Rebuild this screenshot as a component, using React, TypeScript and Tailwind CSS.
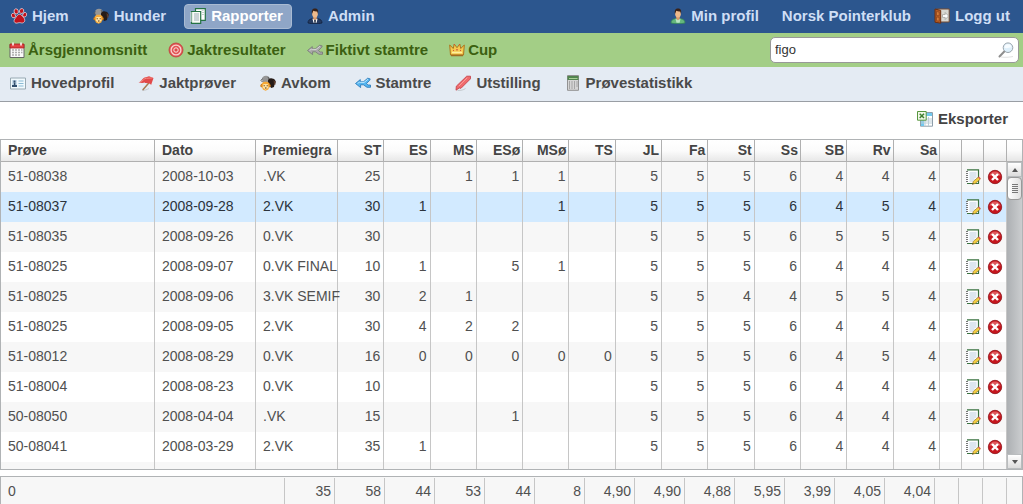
import type { ReactNode } from 'react'
import clsx from 'clsx'

function Icon({ children }: { children: ReactNode }) {
  return (
    <svg className="size-4 shrink-0" viewBox="0 0 16 16" fill="none" aria-hidden="true">
      {children}
    </svg>
  )
}

function PawIcon() {
  return (
    <Icon>
      <g fill="#c1121c" stroke="#fff" strokeWidth=".6">
        <ellipse cx="2.4" cy="7.5" rx="2" ry="2.3" transform="rotate(-30 2.4 7.5)" />
        <ellipse cx="5.2" cy="3.4" rx="2.1" ry="2.6" transform="rotate(-15 5.2 3.4)" />
        <ellipse cx="10.6" cy="3" rx="2.1" ry="2.5" transform="rotate(15 10.6 3)" />
        <ellipse cx="13.7" cy="6.8" rx="1.9" ry="2.4" transform="rotate(25 13.7 6.8)" />
        <path d="M8.5 6.3c2 0 2.4 1.700 3.900 3 1.900 1.700 1.900 4.400-.1 5.400-1.600.8-2.600-.2-4-.1-1.600.1-3 1.200-4.300.1-1.700-1.400-.8-3.400.5-4.800 1.200-1.300 1.900-3.600 4-3.600z" />
      </g>
    </Icon>
  )
}

function DogsIcon() {
  return (
    <Icon>
      <path d="M2 4.5C2 2 3.5.8 6 .8S9.7 2 9.8 4.4L8.5 8H3z" fill="#969696" />
      <path d="M2.5 3.5 1 5.5 2.5 7M8 2l1 2" stroke="#5d5d5d" />
      <path d="M8 5.6c.5-2 2-2.6 4-2.2 2 .2 3.7 1.4 3.8 3.6l-1.2 2-.6 3-2.6 1L8 10z" fill="#261b17" />
      <path d="m13.5 5 2 1.5v3l-1.5.3z" fill="#5b3929" />
      <path d="M1.5 9c.8-1.700 2-2.300 4-2.300s3.600.6 4.300 2.300l.6 2.300-1.200.8-.9 2.400-2.700 1.200-2.700-1.200L2 12.100l-1.400-.8z" fill="#f7a938" />
      <path d="M3.5 9h4.2l.8 3.5-2.9 2.3-2.9-2.3z" fill="#ffe3a1" />
      <path d="M1.5 9 .7 11.3l1.4.8M9.6 9l.8 2.300-1.300.8" stroke="#c37314" />
      <path d="M3.7 10.3h1v1h-1zM6.7 10.3h1v1h-1zM5 12.5h1.5v1H5z" fill="#50260c" />
    </Icon>
  )
}

function ReportIcon() {
  return (
    <Icon>
      <path d="M5.5.7h9.800v11.600H5.5z" fill="#fff" stroke="#257344" strokeWidth="1.2" />
      <path d="M1.5 3.5h9.200v11.800H1.5z" fill="#f7faf5" stroke="#257344" strokeWidth="1.2" />
      <path d="M4 6h5M4 8h5M4 10h5M4 12h5" stroke="#9dadb7" />
      <path d="M0 5h2.5M0 7h2.5M0 9h2.5M0 11h2.5M0 13h2.5" stroke="#e9efed" />
      <path d="M11.7 2.5h2M12 4.5h2M12 6.5h2" stroke="#c6d0d0" />
    </Icon>
  )
}

function PersonIcon({ suit }: { suit: boolean }) {
  return (
    <Icon>
      <path
        d="M1 15c0-2.6 1.2-3.6 4-4.3h6c2.8.7 4 1.7 4 4.3-3.5 1-10.500 1-14 0z"
        fill={suit ? '#243a61' : '#65b97d'}
        stroke={suit ? '#12213c' : '#33835a'}
        strokeWidth=".8"
      />
      <path d="M6.200 8h3.600v3L8 13.500 6.200 11z" fill="#d99b6c" />
      <path d="m5.400 10.500 2.600 1.700 2.600-1.700-1 4.300H6.500z" fill={suit ? '#fff' : '#b9e6c4'} />
      {suit && <path d="m8 11.500 1 1-.5 2.500h-1L7 12.500z" fill="#2a3649" />}
      <ellipse cx="8" cy="5.5" rx="2.9" ry="3.9" fill="#efba8b" />
      <path d="M5 6C4.200 2.300 5.500.5 8 .5S11.800 2.300 11 6l-.7-2.600c-1.400.2-3-.1-4-.7z" fill="#392117" />
    </Icon>
  )
}

function DoorIcon() {
  return (
    <Icon>
      <path d="M2.5 1h12.700v13H2.5z" fill="#d8d8d2" stroke="#754b31" />
      <path d="m1 1 5.700 1.400v12.800L1 14.200z" fill="#b95c24" stroke="#6d2f10" />
      <path d="m2.500 3.500 2.700.6v3.700l-2.700-.3zM2.500 9l2.700.3v3.900l-2.700-.5z" fill="#d47c3b" stroke="#8a421a" strokeWidth=".7" />
      <path d="M8.500 6.600h2.700V4.500L14.500 8l-3.300 3.500V9.400H8.500z" fill="#fff" stroke="#969692" strokeWidth=".7" />
    </Icon>
  )
}

function CalendarIcon() {
  return (
    <Icon>
      <path d="M1 2.5h14v13H1z" fill="#fafafa" stroke="#676767" />
      <path d="M1 2h14v4H1z" fill="#e24444" stroke="#aa2020" strokeWidth=".8" />
      <path d="M4 .5v3M12 .5v3" stroke="#fff" strokeWidth="1.5" />
      <path d="M3 8h2M6 8h2M9 8h2M12 8h1.500M3 10.500h2M6 10.500h2M9 10.500h2M12 10.500h1.500M3 13h2M6 13h2M9 13h2" stroke="#adadad" strokeWidth="1.5" />
    </Icon>
  )
}

function TargetIcon() {
  return (
    <Icon>
      <circle cx="8" cy="8" r="7" fill="#e25555" stroke="#c03a3a" strokeWidth=".8" />
      <circle cx="8" cy="8" r="4.9" stroke="#f9d4d0" strokeWidth="1.3" />
      <circle cx="8" cy="8" r="2.2" fill="#df4a49" stroke="#fbe5e2" />
    </Icon>
  )
}

function BranchIcon({ gray }: { gray?: boolean }) {
  return (
    <Icon>
      <path
        d="M.5 8.500 5.300 4.600v2.200h3.200l4.200-3.600 2.500.7-.5 1.400-3.200 3.200 1.600 1.500h2.400v2.300H12L8.400 9.800H5.600v2.800z"
        fill={gray ? '#a9a9a9' : '#55b5ef'}
        stroke={gray ? '#767676' : '#2475b6'}
        strokeWidth=".8"
        strokeLinejoin="round"
      />
      <path d="m2.500 8.300 2-1 4.500.2 4-3.300" stroke={gray ? '#d4d4d4' : '#b6e5ff'} />
    </Icon>
  )
}

function CrownIcon() {
  return (
    <Icon>
      <path d="M1.500 13 .7 3l3.600 3.500L5.200 2 8 5.700 10.800 2l.9 4.500L15.300 3l-.8 10z" fill="#f5ca50" stroke="#ad751d" />
      <path d="M3 10.500h10" stroke="#fff0a0" strokeWidth="1.5" />
      <path d="M7.300 7h1.400v1.500H7.300zM4 8h1v1H4zM11 8h1v1h-1zM5 2h1v1H5zM10 2h1v1h-1z" fill="#cf5839" />
      <path d="M2 13.500h12" stroke="#a16b22" strokeWidth="1.5" />
    </Icon>
  )
}

function CardIcon() {
  return (
    <Icon>
      <path d="M.5 3h15v11H.5z" fill="#f0f9fd" stroke="#98a9b2" />
      <path d="M2 5h5v7H2z" fill="#c8ddec" />
      <path d="M3.500 5.500h2v2.300h-2zM3.800 8h1.600v2H7V12H2v-2h1.800z" fill="#304e6d" />
      <path d="M8.500 6h5M8.500 8.500h5M8.500 11h5" stroke="#8bbbd4" />
    </Icon>
  )
}

function FlagIcon() {
  return (
    <Icon>
      <path d="M4 15.500c3-.2 5-.8 7-2" stroke="#c6cbd0" />
      <path d="m12.500 6-7.800 9" stroke="#a97a4e" strokeWidth="1.5" />
      <path d="M.5 7.300C4 6.500 4.500 2 8 2.200l3-.9L15.500 3l-2.400 7C11 7.300 8.500 9 6.700 7.600 5 8.200 3 8.200.5 7.300z" fill="#e24949" />
      <path d="M2 6.900C5 6.500 6 3 8.500 3.300l6-.4" stroke="#f48b82" />
    </Icon>
  )
}

function RibbonIcon() {
  return (
    <Icon>
      <path d="M2.500 15.500c3.500 0 6-.5 8-2" stroke="#c4cace" />
      <path d="M11.700 1.200h3.800v2.600L6 13.300l-1.700-.3L1 15.200l.3-4z" fill="#ef6a6c" stroke="#c23b42" strokeWidth=".8" />
      <path d="m12.300 2.700-8.500 8.500" stroke="#fa9c9b" />
    </Icon>
  )
}

function CalculatorIcon() {
  return (
    <Icon>
      <path d="M2.500.5h11v14.800h-11z" fill="#d5d5d5" stroke="#929292" />
      <path d="M2.500 1h11v4h-11z" fill="#52844f" />
      <path d="M4 3.500h8.500" stroke="#a8cf95" />
      <path d="M4 7h1M6.500 7h1M9 7h1M11.500 7h1M4 9h1M6.500 9h1M9 9h1M11.500 9h1M4 11h1M6.500 11h1M9 11h1M11.500 11h1M4 13h1M6.500 13h1M9 13h1" stroke="#777" />
    </Icon>
  )
}

function SearchIcon() {
  return (
    <Icon>
      <path d="M3 15c4 .6 8 .3 12-.5" stroke="#e1e1e1" />
      <path d="m1.500 14.500 4.800-5" stroke="#8e8e8e" strokeWidth="2" strokeLinecap="round" />
      <circle cx="10" cy="5.7" r="4.8" fill="#deeffa" stroke="#9ba5ac" />
      <path d="M6.500 6c3 .5 5-.5 7-.5a3.500 3.500 0 0 0-7 .5z" fill="#f7fcff" />
    </Icon>
  )
}

function SpreadsheetIcon() {
  return (
    <Icon>
      <path d="M3.500 1.500h12v13.700h-12z" fill="#fff" stroke="#8e9eaa" />
      <path d="M4 2h11v3H4zM4 8h3v7H4z" fill="#72c9ef" />
      <path d="M4 8h11M4 10h11M4 12h11M8 6v9M11.500 6v9" stroke="#bdced7" />
      <path d="M.5.5h8.700v8.700H.5z" fill="#f1f8e8" stroke="#57963f" />
      <path d="m2.700 2.700 4.300 4.300M7 2.700 2.700 7" stroke="#417f31" strokeWidth="1.5" />
    </Icon>
  )
}

function EditIcon() {
  return (
    <Icon>
      <path d="M2 .8h11.500v13.700H2z" fill="#fcfdff" />
      <path d="M2 .8h11.500v13.700H2" stroke="#39723f" strokeWidth="1.2" />
      <path d="M4.500 4h7M4.500 6h7M4.500 8h7M4.500 10h5M4.500 12h4" stroke="#bdd0df" />
      <path d="M1 2.500h2M1 4.500h2M1 6.500h2M1 8.500h2M1 10.500h2M1 12.500h2" stroke="#777" />
      <path d="m7.500 15.300.8-2.900 5-4.300 2 2-5 4.300z" fill="#f3cf42" stroke="#98752a" strokeWidth=".7" />
      <path d="m13 8.300 1-.8 1.800 1.900-1 .8z" fill="#dc6054" />
      <path d="m7.400 15.400.4-1.500 1 .9z" fill="#222" />
    </Icon>
  )
}

function DeleteIcon() {
  return (
    <Icon>
      <circle cx="8" cy="8" r="6.7" fill="#c6161e" stroke="#8b1016" strokeWidth=".8" />
      <path d="M2.500 7a5.600 5.600 0 0 1 11 0c-3-1.300-8-1.300-11 0z" fill="#df5a5d" />
      <path d="m5 5 6 6M11 5l-6 6" stroke="#fff" strokeWidth="2.4" />
    </Icon>
  )
}

interface NavItem {
  label: string
  icon?: ReactNode
  active?: boolean
}

const mainNav: NavItem[] = [
  { label: 'Hjem', icon: <PawIcon /> },
  { label: 'Hunder', icon: <DogsIcon /> },
  { label: 'Rapporter', icon: <ReportIcon />, active: true },
  { label: 'Admin', icon: <PersonIcon suit /> },
]

const userNav: NavItem[] = [
  { label: 'Min profil', icon: <PersonIcon suit={false} /> },
  { label: 'Norsk Pointerklub' },
  { label: 'Logg ut', icon: <DoorIcon /> },
]

const reportNav: NavItem[] = [
  { label: 'Årsgjennomsnitt', icon: <CalendarIcon /> },
  { label: 'Jaktresultater', icon: <TargetIcon /> },
  { label: 'Fiktivt stamtre', icon: <BranchIcon gray /> },
  { label: 'Cup', icon: <CrownIcon /> },
]

const dogNav: NavItem[] = [
  { label: 'Hovedprofil', icon: <CardIcon /> },
  { label: 'Jaktprøver', icon: <FlagIcon /> },
  { label: 'Avkom', icon: <DogsIcon /> },
  { label: 'Stamtre', icon: <BranchIcon /> },
  { label: 'Utstilling', icon: <RibbonIcon /> },
  { label: 'Prøvestatistikk', icon: <CalculatorIcon /> },
]

const columns = ['Prøve', 'Dato', 'Premiegra', 'ST', 'ES', 'MS', 'ESø', 'MSø', 'TS', 'JL', 'Fa', 'St', 'Ss', 'SB', 'Rv', 'Sa']

const rows = [
  ['51-08038', '2008-10-03', '.VK', '25', '', '1', '1', '1', '', '5', '5', '5', '6', '4', '4', '4'],
  ['51-08037', '2008-09-28', '2.VK', '30', '1', '', '', '1', '', '5', '5', '5', '6', '4', '5', '4'],
  ['51-08035', '2008-09-26', '0.VK', '30', '', '', '', '', '', '5', '5', '5', '6', '5', '5', '4'],
  ['51-08025', '2008-09-07', '0.VK FINAL', '10', '1', '', '5', '1', '', '5', '5', '5', '6', '4', '4', '4'],
  ['51-08025', '2008-09-06', '3.VK SEMIF', '30', '2', '1', '', '', '', '5', '5', '4', '4', '5', '5', '4'],
  ['51-08025', '2008-09-05', '2.VK', '30', '4', '2', '2', '', '', '5', '5', '5', '6', '4', '4', '4'],
  ['51-08012', '2008-08-29', '0.VK', '16', '0', '0', '0', '0', '0', '5', '5', '5', '6', '4', '5', '4'],
  ['51-08004', '2008-08-23', '0.VK', '10', '', '', '', '', '', '5', '5', '5', '6', '4', '4', '4'],
  ['50-08050', '2008-04-04', '.VK', '15', '', '', '1', '', '', '5', '5', '5', '6', '4', '4', '4'],
  ['50-08041', '2008-03-29', '2.VK', '35', '1', '', '', '', '', '5', '5', '5', '6', '4', '4', '4'],
]

const totals = ['35', '58', '44', '53', '44', '8', '4,90', '4,90', '4,88', '5,95', '3,99', '4,05', '4,04']

const selectedRow = 1

interface NavListProps {
  items: NavItem[]
  label: string
  className?: string
  compact?: boolean
}

function NavList({ items, label, className, compact }: NavListProps) {
  return (
    <nav aria-label={label} className={clsx('flex items-center text-[15px] font-bold whitespace-nowrap', className)}>
      {items.map((item) => (
        <a
          key={item.label}
          href="#"
          className={clsx(
            'flex h-[25px] items-center rounded border pr-2 pl-[5px] leading-5',
            compact ? 'gap-[3px]' : 'gap-[5px] pb-0.5',
            item.active ? 'border-[#a9bbd3] bg-[#8fa6c7] text-white' : 'border-transparent',
          )}
        >
          {item.icon}
          <span>{item.label}</span>
        </a>
      ))}
    </nav>
  )
}

function ResultsTable() {
  return (
    <div className="min-w-0 flex-1">
      <table className="w-full table-fixed border-separate border-spacing-0 text-sm">
        <colgroup>
          <col className="w-[154px]" />
          <col className="w-[101px]" />
          <col className="w-[82px]" />
          {columns.slice(3).map((name) => (
            <col key={name} />
          ))}
          <col className="w-[22px]" />
          <col className="w-[22px]" />
          <col className="w-[23px]" />
        </colgroup>
        <thead>
          <tr className="h-[22px] bg-linear-to-b from-white via-[#fbfbfb] to-[#e6e6e6]">
            {columns.map((name, i) => (
              <th
                key={name}
                scope="col"
                className={clsx(
                  'border-r border-b border-[#b0b0b0] p-0 pb-0.5 leading-[18px] font-bold whitespace-nowrap text-[#444]',
                  i < 3 ? 'pl-[7px] text-left' : 'pr-0.5 text-right',
                )}
              >
                {name}
              </th>
            ))}
            <td className="border-r border-b border-[#b0b0b0] p-0" />
            <td className="border-r border-b border-[#b0b0b0] p-0" />
            <td className="border-r border-b border-[#b0b0b0] p-0" />
          </tr>
        </thead>
        <tbody>
          {rows.map((row, r) => (
            <tr
              key={row[1]}
              className={clsx(
                'h-[30px]',
                r === selectedRow ? 'bg-[#d2eaff] text-[#2b333c]' : 'text-[#505050] odd:bg-[#f7f7f7]',
              )}
            >
              {row.map((value, i) => (
                <td
                  key={columns[i]}
                  className={clsx(
                    'border-r border-[#c6c6c6] p-0 pb-0.5 leading-5 whitespace-nowrap',
                    i < 3 ? 'pl-[7px] text-left' : 'pr-[3px] text-right',
                  )}
                >
                  {value}
                </td>
              ))}
              <td className="border-r border-[#c6c6c6] p-0" />
              <td className="border-r border-[#c6c6c6] p-0">
                <button type="button" aria-label={`Rediger ${row[0]}`} className="mx-auto block">
                  <EditIcon />
                </button>
              </td>
              <td className="border-r border-[#c6c6c6] p-0">
                <button type="button" aria-label={`Slett ${row[0]}`} className="mx-auto block">
                  <DeleteIcon />
                </button>
              </td>
            </tr>
          ))}
          <tr className="h-[7px] bg-[#f7f7f7]">
            {Array.from({ length: 19 }, (_, i) => (
              <td key={i} className="border-r border-[#c6c6c6] p-0" />
            ))}
          </tr>
        </tbody>
      </table>
    </div>
  )
}

function ScrollRail() {
  return (
    <div className="flex w-[15px] shrink-0 flex-col">
      <div className="h-[22px] border-b border-[#b0b0b0] bg-linear-to-b from-white via-[#fbfbfb] to-[#e6e6e6]" />
      <div className="flex flex-1 flex-col bg-linear-to-r from-[#adb0b3] to-[#cbcdcf]">
        <button
          type="button"
          aria-label="Rull opp"
          className="flex h-[15px] items-center justify-center border border-[#b9bcbe] bg-linear-to-b from-white to-[#dcdcdc]"
        >
          <svg className="h-1 w-1.5" viewBox="0 0 6 4" aria-hidden="true">
            <path d="M3 0l3 4H0z" fill="#555" />
          </svg>
        </button>
        <div className="flex h-[23px] flex-col items-center justify-center gap-px rounded-sm border border-[#999] bg-linear-to-r from-white to-[#e0e0e0]">
          {[0, 1, 2, 3, 4].map((i) => (
            <span key={i} className="h-px w-1.5 bg-[#777]" />
          ))}
        </div>
        <button
          type="button"
          aria-label="Rull ned"
          className="mt-auto flex h-[15px] items-center justify-center border border-[#b9bcbe] bg-linear-to-b from-white to-[#dcdcdc]"
        >
          <svg className="h-1 w-1.5" viewBox="0 0 6 4" aria-hidden="true">
            <path d="M0 0h6L3 4z" fill="#555" />
          </svg>
        </button>
      </div>
    </div>
  )
}

function TotalsTable() {
  return (
    <div className="mt-1.5 border-x border-t border-[#b0b3b5] bg-[#f7f7f7] pt-px">
      <table aria-label="Sum" className="w-full table-fixed border-separate border-spacing-0 text-sm text-[#505050]">
        <colgroup>
          <col />
          {totals.map((_, i) => (
            <col key={i} className="w-[50px]" />
          ))}
          <col className="w-6" />
          <col className="w-6" />
          <col className="w-6" />
          <col className="w-[15px]" />
        </colgroup>
        <tbody>
          <tr className="h-[26px]">
            <td className="border-r border-[#c6c6c6] p-0 pl-[7px] leading-5">0</td>
            {totals.map((value, i) => (
              <td key={i} className="border-r border-[#c6c6c6] p-0 pr-[3px] text-right leading-5">
                {value}
              </td>
            ))}
            <td className="border-r border-[#c6c6c6] p-0" />
            <td className="border-r border-[#c6c6c6] p-0" />
            <td className="border-r border-[#c6c6c6] p-0" />
            <td className="p-0" />
          </tr>
        </tbody>
      </table>
    </div>
  )
}

export default function App() {
  return (
    <div className="bg-white font-['Liberation_Sans',Arial,sans-serif] text-[#444]">
      <header>
        <div className="flex h-[33px] items-center justify-between bg-[#2c568e] pr-1 pl-[5px] text-[#cfdef5]">
          <NavList items={mainNav} label="Hovedmeny" className="gap-[9px]" />
          <NavList items={userNav} label="Bruker" className="gap-2" />
        </div>
        <div className="flex h-[34px] items-center justify-between bg-[#a3ce86] pr-1 pl-[3px] text-[#3b6010]">
          <NavList items={reportNav} label="Rapporter" className="gap-1.5" compact />
          <form role="search" className="flex h-[26px] w-[249px] items-center rounded-[5px] border border-[#999] bg-white pr-1 pl-1">
            <input
              type="text"
              aria-label="Søk"
              defaultValue="figo"
              className="min-w-0 flex-1 bg-transparent text-[13px] leading-5 text-[#333] outline-none"
            />
            <button type="button" aria-label="Søk">
              <SearchIcon />
            </button>
          </form>
        </div>
        <div className="flex h-[35px] items-center border-b border-[#999ea4] bg-[#e4ebf3] pl-1 text-[#4a4a4a]">
          <NavList items={dogNav} label="Hund" className="gap-[9px]" />
        </div>
      </header>

      <main>
        <div className="flex h-[37px] items-center justify-end pr-[15px] pb-[3px]">
          <button type="button" className="flex items-center gap-[5px] text-[15px] leading-5 font-bold">
            <SpreadsheetIcon />
            Eksporter
          </button>
        </div>
        <div className="flex border border-[#b0b3b5]">
          <ResultsTable />
          <ScrollRail />
        </div>
        <TotalsTable />
      </main>
    </div>
  )
}
